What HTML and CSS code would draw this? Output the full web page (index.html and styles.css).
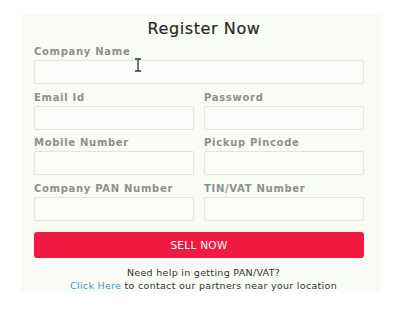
FILE: index.html
```html
<!DOCTYPE html>
<html>
<head>
<meta charset="utf-8">
<link rel="stylesheet" href="styles.css">
</head>
<body>
<div class="panel">
  <h1 class="title">Register Now</h1>
  <div class="grid">
    <div class="field full">
      <label class="label">Company Name</label>
      <div class="input"></div>
      <svg class="cursor" width="8" height="14" viewBox="0 0 8 14"><path d="M1 1h6M1 13h6M4 1v12" stroke="#333" stroke-width="1.3" fill="none"/></svg>
    </div>
    <div class="field">
      <label class="label">Email Id</label>
      <div class="input"></div>
    </div>
    <div class="field">
      <label class="label">Password</label>
      <div class="input"></div>
    </div>
    <div class="field">
      <label class="label">Mobile Number</label>
      <div class="input"></div>
    </div>
    <div class="field">
      <label class="label">Pickup Pincode</label>
      <div class="input"></div>
    </div>
    <div class="field">
      <label class="label">Company PAN Number</label>
      <div class="input"></div>
    </div>
    <div class="field">
      <label class="label">TIN/VAT Number</label>
      <div class="input"></div>
    </div>
  </div>
  <button class="btn">SELL NOW</button>
  <p class="help">Need help in getting PAN/VAT?<br><a class="link">Click Here</a> to contact our partners near your location</p>
</div>
</body>
</html>
```
FILE: styles.css
```css
html, body {
  margin: 0;
  padding: 0;
  background: #ffffff;
}
body {
  font-family: "DejaVu Sans", sans-serif;
}
.panel {
  margin: 14px 0 0 21px;
  width: 360px;
  height: 279px;
  box-sizing: border-box;
  padding: 5px 17px 0 13px;
  background: #f9fbf5;
}
.title {
  margin: 0;
  font-size: 16px;
  line-height: 20px;
  font-weight: normal;
  text-align: center;
  color: #2a2a2a;
  letter-spacing: 0.6px;
  padding-left: 10px;
  -webkit-text-stroke: 0.2px #2a2a2a;
}
.grid {
  margin-top: 6px;
  display: grid;
  grid-template-columns: 160px 160px;
  column-gap: 10px;
  row-gap: 6.5px;
}
.field {
  position: relative;
  display: flex;
  flex-direction: column;
}
.full {
  grid-column: 1 / 3;
}
.label {
  font-size: 10px;
  line-height: 14px;
  height: 14px;
  margin-bottom: 1px;
  color: #8f8f8f;
  font-weight: bold;
  letter-spacing: 0.7px;
}
.input {
  height: 24px;
  box-sizing: border-box;
  background: #fbfcf9;
  border: 1px solid #e4e6e0;
  border-radius: 2px;
  box-shadow: 0 0 1px rgba(0,0,0,0.08);
}
.cursor {
  position: absolute;
  left: 100px;
  top: 13px;
}
.btn {
  display: block;
  margin-top: 11px;
  width: 330px;
  height: 26px;
  border: none;
  border-radius: 3px;
  background: #f01a40;
  color: #ffffff;
  font-family: "DejaVu Sans", sans-serif;
  font-size: 10.5px;
  letter-spacing: 0.3px;
  padding: 0;
}
.help {
  margin: 8px 0 0;
  padding-left: 9px;
  font-size: 9.5px;
  line-height: 13px;
  text-align: center;
  color: #333333;
  letter-spacing: 0.3px;
}
.link {
  color: #3b9ad6;
}
```
